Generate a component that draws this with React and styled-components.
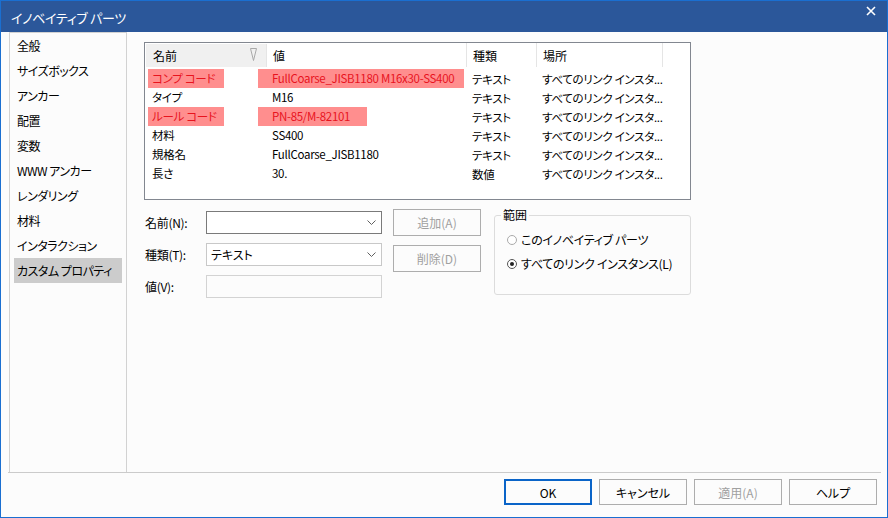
import React from 'react'
import styled, { createGlobalStyle } from 'styled-components'

const GlobalStyle = createGlobalStyle`
  html, body {
    margin: 0;
    padding: 0;
    background: #fcfcfc;
  }
  * {
    box-sizing: border-box;
  }
  body {
    font-family: "Noto Sans CJK JP", "Noto Sans", sans-serif;
    font-feature-settings: "palt";
    font-size: 12px;
    color: #000;
  }
`;

const pages = [
  '全般',
  'サイズボックス',
  'アンカー',
  '配置',
  '変数',
  'WWW アンカー',
  'レンダリング',
  '材料',
  'インタラクション',
  'カスタム プロパティ',
];

const props = [
  { name: 'コンプ コード', value: 'FullCoarse_JISB1180 M16x30-SS400', type: 'テキスト', hl: 206 },
  { name: 'タイプ', value: 'M16', type: 'テキスト' },
  { name: 'ルール コード', value: 'PN-85/M-82101', type: 'テキスト', hl: 109 },
  { name: '材料', value: 'SS400', type: 'テキスト' },
  { name: '規格名', value: 'FullCoarse_JISB1180', type: 'テキスト' },
  { name: '長さ', value: '30.', type: '数値' },
];

export default function App() {
  return (
    <>
      <GlobalStyle />
      <Window>
        <TitleBar>
          <Title>イノベイティブ パーツ</Title>
          <CloseBtn>
            <svg width="10" height="10" viewBox="0 0 10 10">
              <path d="M1 1 L9 9 M9 1 L1 9" stroke="#fff" strokeWidth="1.6" />
            </svg>
          </CloseBtn>
        </TitleBar>

        <Content>
          <Sidebar>
            {pages.map((p, i) => (
              <NavItem key={p} $active={i === pages.length - 1}>{p}</NavItem>
            ))}
          </Sidebar>

          <Panel>
            <Table>
              <HeaderRow>
                <HeadCell $w={121} $sorted>
                  名前
                  <SortMark width="7" height="13" viewBox="0 0 7 13">
                    <path d="M0.5 0.5 L6.5 0.5 L3.5 12.5 Z" fill="none" stroke="#a8a8a8" strokeWidth="1" />
                  </SortMark>
                </HeadCell>
                <HeadCell $w={200}>値</HeadCell>
                <HeadCell $w={70}>種類</HeadCell>
                <HeadCell $w={126}>場所</HeadCell>
              </HeaderRow>
              {props.map((r) => (
                <Row key={r.name}>
                  <Cell $w={121}>
                    <Mark $hl={!!r.hl} style={{ width: 76 }}>{r.name}</Mark>
                  </Cell>
                  <Cell $w={200}>
                    <Mark $hl={!!r.hl} $shift style={r.hl ? { width: r.hl } : undefined}>{r.value}</Mark>
                  </Cell>
                  <Cell $w={70} $pad>{r.type}</Cell>
                  <Cell $w={126} $pad>すべてのリンク インスタ...</Cell>
                </Row>
              ))}
            </Table>

            <FormArea>
              <Fields>
                <Label>名前(N):</Label>
                <Combo $focus>
                  <span />
                  <Chevron />
                </Combo>
                <Label>種類(T):</Label>
                <Combo>
                  <span>テキスト</span>
                  <Chevron />
                </Combo>
                <Label>値(V):</Label>
                <TextBox />
              </Fields>

              <SideButtons>
                <SmallButton disabled>追加(A)</SmallButton>
                <SmallButton disabled>削除(D)</SmallButton>
              </SideButtons>

              <GroupBox>
                <Legend>範囲</Legend>
                <RadioRow>
                  <Radio />
                  このイノベイティブ パーツ
                </RadioRow>
                <RadioRow>
                  <Radio $checked />
                  すべてのリンク インスタンス(L)
                </RadioRow>
              </GroupBox>
            </FormArea>
          </Panel>
        </Content>

        <Footer>
          <DlgButton $default>OK</DlgButton>
          <DlgButton>キャンセル</DlgButton>
          <DlgButton disabled>適用(A)</DlgButton>
          <DlgButton>ヘルプ</DlgButton>
        </Footer>
      </Window>
    </>
  )
}

function Chevron() {
  return (
    <svg width="9" height="5" viewBox="0 0 9 5">
      <path d="M0.5 0.5 L4.5 4.5 L8.5 0.5" fill="none" stroke="#606060" strokeWidth="1" />
    </svg>
  )
}

const Window = styled.div`
  width: 888px;
  height: 518px;
  border: 1px solid #1a6fd1;
  display: flex;
  flex-direction: column;
  background: #fcfcfc;
  overflow: hidden;
`;

const TitleBar = styled.div`
  height: 32px;
  flex: none;
  background: #2b579a;
  display: flex;
  align-items: center;
  justify-content: space-between;
  padding: 0 11px 1px 11px;
  margin: -1px -1px 0 -1px;
  border-top: 1px solid #1a6fd1;
`;

const Title = styled.div`
  color: #fff;
  font-size: 13px;
  letter-spacing: -0.3px;
  padding-top: 2px;
`;

const CloseBtn = styled.div`
  display: flex;
  align-items: center;
  margin-top: -10px;
  margin-right: 1px;
`;

const Content = styled.div`
  height: 441px;
  flex: none;
  display: flex;
  margin: 0 6px 0 7px;
  border-bottom: 1px solid #cbcbcb;
`;

const Sidebar = styled.div`
  width: 118px;
  margin-left: 1px;
  border: 1px solid #d2d2d2;
  border-bottom: none;
  padding: 0 4px;
  display: flex;
  flex-direction: column;
`;

const NavItem = styled.div`
  height: 25px;
  line-height: 25px;
  padding-left: 3px;
  font-size: 12px;
  letter-spacing: -0.5px;
  white-space: nowrap;
  background: ${(p) => (p.$active ? '#cccccc' : 'transparent')};
`;

const Panel = styled.div`
  flex: 1;
  padding: 10px 0 0 17px;
`;

const Table = styled.div`
  width: 547px;
  height: 158px;
  border: 1px solid #828790;
  background: #fff;
  font-size: 11.5px;
`;

const HeaderRow = styled.div`
  display: flex;
  height: 24px;
  margin-bottom: 2px;
  font-size: 12px;
`;

const HeadCell = styled.div`
  position: relative;
  width: ${(p) => p.$w}px;
  display: flex;
  align-items: center;
  padding-left: ${(p) => (p.$sorted ? 7 : 6)}px;
  border-right: 1px solid #e5e5e5;
  background: ${(p) => (p.$sorted ? '#f0f0f0' : '#fff')};
  margin: ${(p) => (p.$sorted ? '1px 0 0 1px' : '0')};
`;

const SortMark = styled.svg`
  position: absolute;
  right: 9px;
  top: 4px;
`;

const Row = styled.div`
  display: flex;
  height: 19px;
  align-items: center;
`;

const Cell = styled.div`
  width: ${(p) => p.$w}px;
  flex: none;
  height: 19px;
  display: flex;
  align-items: center;
  padding-left: ${(p) => (p.$pad ? 6 : 0)}px;
  white-space: nowrap;
  letter-spacing: -0.3px;
`;

const Mark = styled.span`
  display: block;
  height: 19px;
  line-height: 19px;
  white-space: nowrap;
  margin-left: ${(p) => (p.$shift ? -8 : 3)}px;
  padding-left: ${(p) => (p.$shift ? 14 : 4)}px;
  background: ${(p) => (p.$hl ? '#ff8e8e' : 'transparent')};
  color: ${(p) => (p.$hl ? '#e8141e' : '#000')};
`;

const FormArea = styled.div`
  display: flex;
  align-items: flex-start;
  margin-top: 9px;
`;

const Fields = styled.div`
  display: grid;
  grid-template-columns: 62px 176px;
  grid-auto-rows: 23px;
  row-gap: 9px;
  margin-top: 2px;
  align-items: center;
`;

const Label = styled.div`
  padding-left: 1px;
  letter-spacing: -0.3px;
`;

const Combo = styled.div`
  height: 23px;
  display: flex;
  align-items: center;
  justify-content: space-between;
  padding: 0 5px 0 4px;
  background: #fff;
  border: 1px solid ${(p) => (p.$focus ? '#7a7a7a' : '#c8c8c8')};
`;

const TextBox = styled.div`
  height: 23px;
  background: #fcfcfc;
  border: 1px solid #d3d3d3;
`;

const SideButtons = styled.div`
  display: flex;
  flex-direction: column;
  gap: 9px;
  margin-left: 11px;
`;

const SmallButton = styled.button`
  width: 88px;
  height: 27px;
  font: inherit;
  background: #fcfcfc;
  border: 1px solid #adadad;
  color: ${(p) => (p.disabled ? '#a0a0a0' : '#000')};
  padding: 0;
`;

const GroupBox = styled.div`
  position: relative;
  width: 197px;
  height: 80px;
  margin: 6px 0 0 13px;
  border: 1px solid #dcdcdc;
  border-radius: 3px;
  padding: 14px 0 0 12px;
  display: flex;
  flex-direction: column;
  gap: 5px;
`;

const Legend = styled.div`
  position: absolute;
  left: 6px;
  top: -9px;
  padding: 0 2px;
  background: #fcfcfc;
  line-height: 16px;
`;

const RadioRow = styled.div`
  display: flex;
  align-items: center;
  gap: 4px;
  height: 19px;
  letter-spacing: -0.3px;
`;

const Radio = styled.span`
  width: 10px;
  height: 10px;
  border-radius: 50%;
  border: 1px solid ${(p) => (p.$checked ? '#555' : '#aaa')};
  background: #fff;
  display: flex;
  align-items: center;
  justify-content: center;
  &::after {
    content: '';
    width: 4px;
    height: 4px;
    border-radius: 50%;
    background: ${(p) => (p.$checked ? '#222' : 'transparent')};
  }
`;

const Footer = styled.div`
  display: flex;
  justify-content: flex-end;
  gap: 7px;
  padding: 6px 10px 0 0;
`;

const DlgButton = styled.button`
  width: 88px;
  height: 26px;
  font: inherit;
  padding: 0;
  background: #fcfcfc;
  color: ${(p) => (p.disabled ? '#a0a0a0' : '#000')};
  border: ${(p) => (p.$default ? '2px solid #0a64c8' : '1px solid #adadad')};
`;
